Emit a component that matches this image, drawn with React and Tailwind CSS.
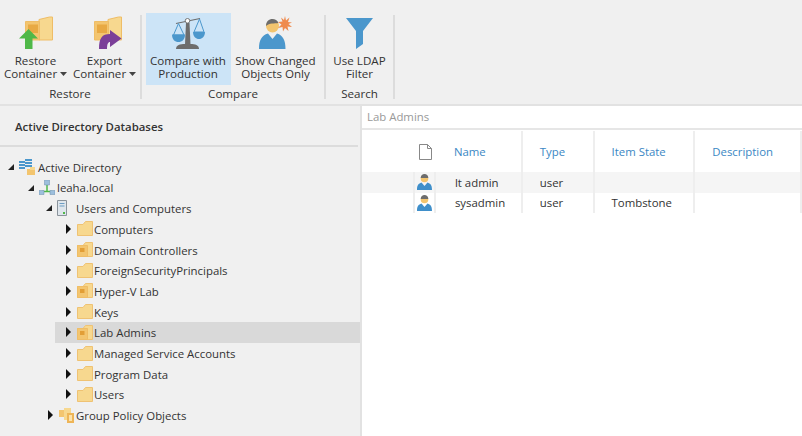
import React from "react";

const font = { fontFamily: '"Open Sans", "Noto Sans", sans-serif' };

const Caret = () => (
  <svg width="7" height="4" viewBox="0 0 7 4" className="inline-block ml-[3px] mb-[2px]">
    <path d="M0 0h7L3.5 4z" fill="#444" />
  </svg>
);

const FolderBig = ({ children }) => (
  <svg width="34" height="33" viewBox="0 0 34 33">
    <path d="M20 5.500V3.500L30.500 1H33.500V24H20z" fill="#f7d88f" stroke="#efbd66" />
    <path d="M6.500 5.500H20.500V24H6.500z" fill="#f3c56f" stroke="#efbd66" />
    <path d="M9 8.500H19V17H9z" fill="#e8a943" />
    {children}
  </svg>
);

const RestoreIcon = () => (
  <FolderBig>
    <path d="M9.500 13L19 22.500H13.500V33H6V22.500H0z" fill="#4fb848" />
  </FolderBig>
);

const ExportIcon = () => (
  <FolderBig>
    <path d="M22 14L33.500 22.500 22 31V26C20 26 19 28 19 33H11C11 22 14 18 22 18z" fill="#7b3f98" />
  </FolderBig>
);

const ScaleIcon = () => (
  <svg width="33" height="32" viewBox="0 0 33 32">
    <path d="M4 6.500L28 1.500" stroke="#6d6d6d" strokeWidth="1.200" />
    <path d="M14 6H17.500L18.500 27H13z" fill="#6d6d6d" />
    <path d="M4 32C4 28 8 27 13 27H18.500C23 27 27 28 27 32z" fill="#6d6d6d" />
    <circle cx="15.500" cy="3.800" r="2.300" fill="#fff" stroke="#777" />
    <path d="M6.500 6.500L1.500 18H12zM27.500 2L22 15H32z" fill="none" stroke="#4b97cc" />
    <path d="M0 17.500H13C13 22.500 10 25 6.500 25S0 22.500 0 17.500zM21 15H33C33 19.500 30 22 27 22S21 19.500 21 15z" fill="#4b97cc" />
  </svg>
);

const ChangedIcon = () => (
  <svg width="33" height="33" viewBox="0 0 33 33">
    <path d="M0 33C0 24 2.500 19.500 9 17.500L13.500 23 18 17.500C24 19.500 26.500 24 26.500 33z" fill="#4b97cc" />
    <circle cx="13.500" cy="10" r="6.500" fill="#f3c56f" />
    <path d="M7 10C7 5.500 10 3 13.500 3 16 3 18.500 4.500 19.500 7 15 7.500 10.500 7 7 10z" fill="#6d6d6d" />
    <path d="M26 0L27 4.500 30.500 1.500 29 6 33 6.500 29.500 8 33 11 28.500 10.500 29.500 15 26 12 24 15.500 23.500 11 19 12 22.500 8.500 19 6 23.500 5.500 22 1.500 25 4z" fill="#ef8a4d" />
  </svg>
);

const FilterIcon = () => (
  <svg width="27" height="31" viewBox="0 0 27 31">
    <path d="M0 0H27L17 13V26L10 31V13z" fill="#4b97cc" />
  </svg>
);

const RibbonButton = ({ icon, lines, caret, active, width }) => (
  <div className={`flex flex-col items-center h-[72px] ${width} ${active ? "bg-[#cce4f7]" : ""}`}>
    <div className="h-[36px] flex items-end justify-center">{icon}</div>
    <div className="mt-[5px] text-center text-[11.600px] leading-[13.400px] text-[#333] whitespace-nowrap">
      <div>{lines[0]}</div>
      <div>
        {lines[1]}
        {caret && <Caret />}
      </div>
    </div>
  </div>
);

const RibbonGroup = ({ label, children, className }) => (
  <div className={`flex flex-col items-center border-r-2 border-[#dcdcdc] h-[84px] mt-[15px] ${className}`}>
    <div className="flex h-[70px] -mt-[2px]">{children}</div>
    <div className="mt-[2px] text-[11.600px] leading-[17px] text-[#333]">{label}</div>
  </div>
);

const Arrow = ({ open }) =>
  open ? (
    <svg width="8" height="8" viewBox="0 0 8 8">
      <path d="M7 1v6H1z" fill="#222" />
    </svg>
  ) : (
    <svg width="7" height="10" viewBox="0 0 7 10">
      <path d="M1 0l5 5-5 5z" fill="#111" />
    </svg>
  );

const Folder = ({ inner }) => (
  <svg width="16" height="15" viewBox="0 0 16 15">
    <path d="M.5 3.500V14.500H15.500V.5H8.500L6 3.500z" fill="#f7d88f" stroke="#efc273" />
    {inner && <path d="M.5 3.500H10.500V14.500H.5z" fill="#f3c56f" stroke="#efbd66" />}
    {inner && <path d="M3 6H7.500V10H3z" fill="#e29e36" />}
  </svg>
);

const AdIcon = () => (
  <svg width="17" height="16" viewBox="0 0 17 16">
    <path d="M0 2H6V4H0zM0 5H6V7H0zM0 8H6V10H0zM6 0H13V2H6zM6 3H13V5H6zM6 6H13V8H6z" fill="#4b97cc" />
    <path d="M8 10H16V16H8z" fill="#f3c56f" />
    <path d="M11 8H16V11H11z" fill="#f7d88f" />
  </svg>
);

const DomainIcon = () => (
  <svg width="16" height="16" viewBox="0 0 16 16">
    <path d="M8 5v7M3 11.500h10" stroke="#4fb848" strokeWidth="1.500" />
    <path d="M5.500 0h5v5h-5zM0 10.500h5v4H0zM11 10.500h5v4h-5z" fill="#9dbfdc" stroke="#6b8fae" strokeWidth=".5" />
  </svg>
);

const ServerIcon = () => (
  <svg width="11" height="16" viewBox="0 0 11 16">
    <path d="M.5.5h9v15h-9z" fill="#dfe6ec" stroke="#8a939b" />
    <path d="M2.500 3h5v1h-5zM2.500 5.500h5v1h-5z" fill="#6d9dc4" />
    <path d="M6 12h2v2H6z" fill="#4fb848" />
  </svg>
);

const GpoIcon = () => (
  <svg width="16" height="15" viewBox="0 0 16 15">
    <path d="M0 2h6v7H0z" fill="#f3c56f" />
    <path d="M5 0h7v12H5z" fill="#f7d88f" />
    <path d="M8 5h7v10H8z" fill="#eeb557" />
    <path d="M10 7h3v6h-3z" fill="#fbe3ad" />
  </svg>
);

const UserIcon = () => (
  <svg width="15" height="16" viewBox="0 0 15 16">
    <path d="M0 16c0-5 1.500-6.500 4.500-7.500l3 3.500 3-3.500c3 1 4.500 2.500 4.500 7.500z" fill="#3f8fca" />
    <circle cx="7.500" cy="4.500" r="3.800" fill="#f3c56f" />
    <path d="M3.700 4c0-2.500 1.800-4 3.800-4s3.800 1.500 3.800 4z" fill="#6d6d6d" />
  </svg>
);

const TreeRow = ({ indent, open, icon, label, selected, labelGap = "ml-[2px]" }) => (
  <div className={`flex items-center h-[20.700px] whitespace-nowrap ${selected ? "bg-[#d9d9d9]" : ""} ${indent}`}>
    <div className="w-[12px] flex items-center justify-start shrink-0">
      <Arrow open={open} />
    </div>
    {icon}
    <span className={`${labelGap} pt-[1px] text-[11.400px] text-[#333]`}>{label}</span>
  </div>
);

const folders = [
  ["Computers", false],
  ["Domain Controllers", true],
  ["ForeignSecurityPrincipals", false],
  ["Hyper-V Lab", true],
  ["Keys", false],
  ["Lab Admins", true],
  ["Managed Service Accounts", false],
  ["Program Data", false],
  ["Users", false],
];

const rows = [
  { name: "lt admin", type: "user", state: "", shaded: true },
  { name: "sysadmin", type: "user", state: "Tombstone", shaded: false },
];

const HeaderCell = ({ children, className }) => (
  <div className={`flex items-center pl-[17px] h-full border-r-2 border-[#eeeeee] text-[11.400px] text-[#3a87c4] ${className}`}>
    {children}
  </div>
);

const Cell = ({ children, className }) => (
  <div className={`flex items-center pl-[17px] h-full border-r-2 border-[#eeeeee] text-[11.400px] text-[#333] ${className}`}>
    {children}
  </div>
);

export default function App() {
  return (
    <div className="w-[802px] h-[436px] overflow-hidden bg-[#f0f0f0] flex flex-col" style={font}>
      <div className="flex h-[104px] border-b-2 border-[#e2e2e2] shrink-0 box-content">
        <RibbonGroup label="Restore" className="w-[142px]">
          <RibbonButton width="w-[69px]" icon={<RestoreIcon />} lines={["Restore", "Container"]} caret />
          <RibbonButton width="w-[69px]" icon={<ExportIcon />} lines={["Export", "Container"]} caret />
        </RibbonGroup>
        <RibbonGroup label="Compare" className="w-[184px]">
          <RibbonButton width="w-[85px]" active icon={<ScaleIcon />} lines={["Compare with", "Production"]} />
          <RibbonButton width="w-[90px]" icon={<ChangedIcon />} lines={["Show Changed", "Objects Only"]} />
        </RibbonGroup>
        <RibbonGroup label="Search" className="w-[69px]">
          <RibbonButton width="w-[60px]" icon={<FilterIcon />} lines={["Use LDAP", "Filter"]} />
        </RibbonGroup>
      </div>
      <div className="flex flex-1 min-h-0">
        <div className="w-[360px] shrink-0 flex flex-col">
          <div className="h-[41px] flex items-center pl-[15px] pt-[2px] text-[11.400px] font-semibold text-[#333] border-b-2 border-[#dcdcdc] mr-[2px] shrink-0">
            Active Directory Databases
          </div>
          <div className="pt-[9.500px]">
            <TreeRow indent="ml-[7px]" open icon={<AdIcon />} label="Active Directory" labelGap="ml-[2px]" />
            <TreeRow indent="ml-[27px]" open icon={<DomainIcon />} label="leaha.local" labelGap="ml-[2px]" />
            <TreeRow indent="ml-[45px]" open icon={<ServerIcon />} label="Users and Computers" labelGap="ml-[8px]" />
            {folders.map(([label, inner]) => (
              <TreeRow
                key={label}
                indent="pl-[10px] ml-[55px]"
                icon={<Folder inner={inner} />}
                label={label}
                selected={label === "Lab Admins"}
                labelGap="ml-[1px]"
              />
            ))}
            <TreeRow indent="ml-[47px]" icon={<GpoIcon />} label="Group Policy Objects" labelGap="ml-[1px]" />
          </div>
        </div>
        <div className="flex-1 bg-white border-l-2 border-[#e2e2e2] min-w-0">
          <div className="h-[24px] flex items-center pl-[5px] text-[11.400px] text-[#999] border-b-2 border-[#e6e6e6]">
            Lab Admins
          </div>
          <div className="flex h-[41px] mt-[1px] pl-[52px]">
            <div className="w-[23px] flex items-center justify-center">
              <svg width="13" height="16" viewBox="0 0 13 16">
                <path d="M.5.5h8l4 4v11H.5zM8.500.5v4h4" fill="#fff" stroke="#888" />
              </svg>
            </div>
            <HeaderCell className="w-[86px]">Name</HeaderCell>
            <HeaderCell className="w-[72px]">Type</HeaderCell>
            <HeaderCell className="w-[101px]">Item State</HeaderCell>
            <HeaderCell className="w-[107px]">Description</HeaderCell>
          </div>
          {rows.map((r) => (
            <div key={r.name} className={`flex h-[20.700px] pl-[52px] ${r.shaded ? "bg-[#f5f5f5]" : ""}`}>
              <div className="w-[23px] flex items-center justify-center border-x-2 border-[#eeeeee] -ml-[1px] mr-[1px]">
                <UserIcon />
              </div>
              <Cell className="w-[86px] pl-[18px]">{r.name}</Cell>
              <Cell className="w-[72px]">{r.type}</Cell>
              <Cell className="w-[101px]">{r.state}</Cell>
              <Cell className="w-[107px]" />
            </div>
          ))}
        </div>
      </div>
    </div>
  );
}
